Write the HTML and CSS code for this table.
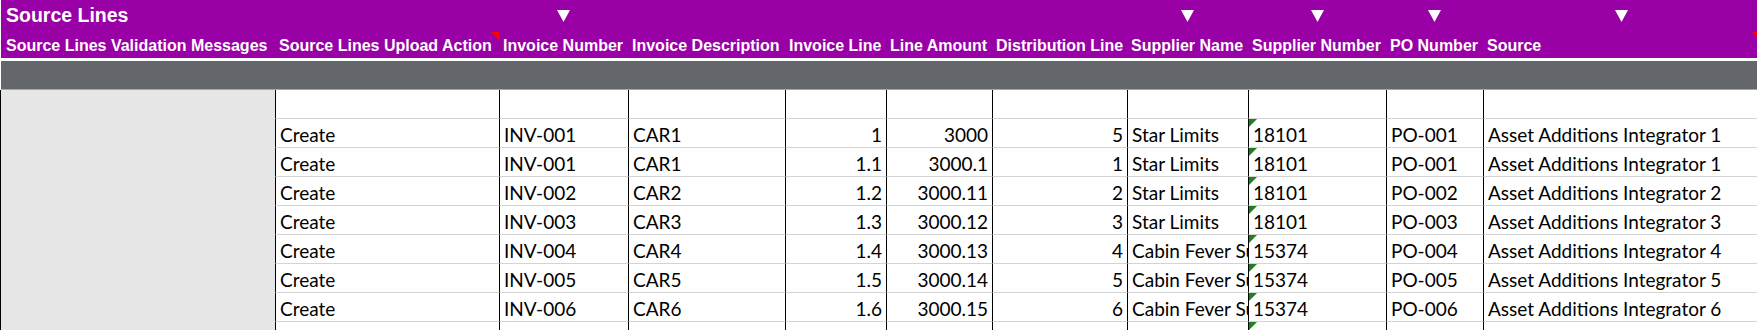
FILE: index.html
```html
<!DOCTYPE html>
<html lang="en">
<head>
<meta charset="utf-8">
<title>Source Lines</title>
<link rel="stylesheet" href="styles.css">
</head>
<body>
<div class="sheet">
  <div class="hdr">
    <div class="hdr-row">
      <div class="title">Source Lines</div>
      <div></div>
      <div class="arr"><svg width="13" height="12" viewBox="0 0 13 12"><path d="M0 0H13L6.5 12Z" fill="#fff"/></svg></div>
      <div></div><div></div><div></div><div></div>
      <div class="arr"><svg width="13" height="12" viewBox="0 0 13 12"><path d="M0 0H13L6.5 12Z" fill="#fff"/></svg></div>
      <div class="arr"><svg width="13" height="12" viewBox="0 0 13 12"><path d="M0 0H13L6.5 12Z" fill="#fff"/></svg></div>
      <div class="arr"><svg width="13" height="12" viewBox="0 0 13 12"><path d="M0 0H13L6.5 12Z" fill="#fff"/></svg></div>
      <div class="arr"><svg width="13" height="12" viewBox="0 0 13 12"><path d="M0 0H13L6.5 12Z" fill="#fff"/></svg></div>
    </div>
    <div class="hdr-row">
      <div class="lbl first">Source Lines Validation Messages</div>
      <div class="lbl note">Source Lines Upload Action</div>
      <div class="lbl">Invoice Number</div>
      <div class="lbl">Invoice Description</div>
      <div class="lbl">Invoice Line</div>
      <div class="lbl">Line Amount</div>
      <div class="lbl">Distribution Line</div>
      <div class="lbl">Supplier Name</div>
      <div class="lbl">Supplier Number</div>
      <div class="lbl">PO Number</div>
      <div class="lbl note">Source</div>
    </div>
  </div>
  <div class="band"></div>
  <div class="grid">
    <div class="side"></div>

    <div class="c"></div><div class="c"></div><div class="c"></div><div class="c num"></div><div class="c num"></div><div class="c num"></div><div class="c"></div><div class="c"></div><div class="c"></div><div class="c"></div>

    <div class="c">Create</div><div class="c">INV-001</div><div class="c">CAR1</div><div class="c num">1</div><div class="c num">3000</div><div class="c num">5</div><div class="c">Star Limits</div><div class="c flag">18101</div><div class="c">PO-001</div><div class="c">Asset Additions Integrator 1</div>

    <div class="c">Create</div><div class="c">INV-001</div><div class="c">CAR1</div><div class="c num">1.1</div><div class="c num">3000.1</div><div class="c num">1</div><div class="c">Star Limits</div><div class="c flag">18101</div><div class="c">PO-001</div><div class="c">Asset Additions Integrator 1</div>

    <div class="c">Create</div><div class="c">INV-002</div><div class="c">CAR2</div><div class="c num">1.2</div><div class="c num">3000.11</div><div class="c num">2</div><div class="c">Star Limits</div><div class="c flag">18101</div><div class="c">PO-002</div><div class="c">Asset Additions Integrator 2</div>

    <div class="c">Create</div><div class="c">INV-003</div><div class="c">CAR3</div><div class="c num">1.3</div><div class="c num">3000.12</div><div class="c num">3</div><div class="c">Star Limits</div><div class="c flag">18101</div><div class="c">PO-003</div><div class="c">Asset Additions Integrator 3</div>

    <div class="c">Create</div><div class="c">INV-004</div><div class="c">CAR4</div><div class="c num">1.4</div><div class="c num">3000.13</div><div class="c num">4</div><div class="c">Cabin Fever Supplies</div><div class="c flag">15374</div><div class="c">PO-004</div><div class="c">Asset Additions Integrator 4</div>

    <div class="c">Create</div><div class="c">INV-005</div><div class="c">CAR5</div><div class="c num">1.5</div><div class="c num">3000.14</div><div class="c num">5</div><div class="c">Cabin Fever Supplies</div><div class="c flag">15374</div><div class="c">PO-005</div><div class="c">Asset Additions Integrator 5</div>

    <div class="c">Create</div><div class="c">INV-006</div><div class="c">CAR6</div><div class="c num">1.6</div><div class="c num">3000.15</div><div class="c num">6</div><div class="c">Cabin Fever Supplies</div><div class="c flag">15374</div><div class="c">PO-006</div><div class="c">Asset Additions Integrator 6</div>

    <div class="c">Create</div><div class="c">INV-007</div><div class="c">CAR7</div><div class="c num">1.7</div><div class="c num">3000.16</div><div class="c num">7</div><div class="c">Cabin Fever Supplies</div><div class="c flag">15374</div><div class="c">PO-007</div><div class="c">Asset Additions Integrator 7</div>
  </div>
</div>
</body>
</html>
```
FILE: styles.css
```css
* { box-sizing: border-box; }

html, body {
  margin: 0;
  padding: 0;
  background: #fff;
}

body {
  width: 1757px;
  height: 330px;
  overflow: hidden;
}

.sheet {
  width: 1760px;
}

.hdr {
  background: #9900a6;
  border-left: 1px solid #fff;
  color: #fff;
  font-family: "Liberation Sans", Arial, sans-serif;
  font-weight: bold;
}

.hdr-row {
  display: grid;
  grid-template-columns: 274px 224px 129px 157px 101px 106px 135px 121px 138px 97px 277px;
  height: 29px;
}

.title {
  font-size: 19.5px;
  line-height: 22px;
  padding: 4px 0 0 5px;
  white-space: nowrap;
}

.arr {
  display: flex;
  justify-content: center;
  padding-top: 10px;
}

.arr svg { display: block; }

.lbl {
  position: relative;
  font-size: 16px;
  line-height: 18px;
  padding: 8px 0 0 4px;
  white-space: nowrap;
}

.lbl.first { padding-left: 5px; }

.note::after {
  content: "";
  position: absolute;
  top: 3px;
  right: 0;
  border-top: 8px solid #ff0000;
  border-left: 8px solid transparent;
}

.band {
  margin-top: 3px;
  margin-left: 1px;
  height: 29px;
  background: #63666a;
  border-bottom: 1px solid #a6a6a6;
}

.grid {
  display: grid;
  grid-template-columns: 275px 224px 129px 157px 101px 106px 135px 121px 138px 97px 277px;
  grid-auto-rows: 29px;
  font-family: Lato, "Liberation Sans", sans-serif;
  font-size: 19px;
  color: #000;
}

.side {
  grid-row: 1 / span 9;
  background: #e6e6e6;
  border-left: 1px solid #000;
}

.c {
  position: relative;
  border-left: 1px solid #000;
  border-bottom: 1px solid #d4d4d4;
  padding: 2px 4px 0;
  line-height: 28px;
  white-space: nowrap;
  overflow: hidden;
}

.num { text-align: right; }

.flag::before {
  content: "";
  position: absolute;
  left: 0;
  top: 0;
  border-top: 8px solid #1f801f;
  border-right: 8px solid transparent;
}
```
